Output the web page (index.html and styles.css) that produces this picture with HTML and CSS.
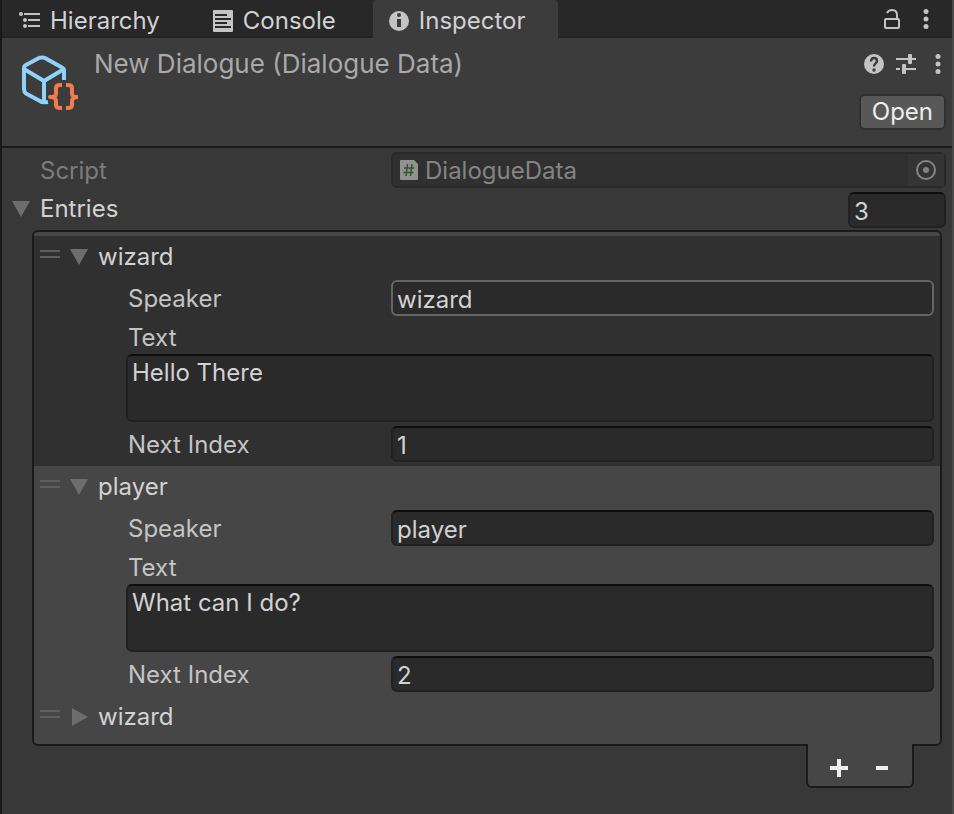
FILE: index.html
```html
<!DOCTYPE html>
<html lang="en">
<head>
    <meta charset="UTF-8">
    <meta name="viewport" content="width=device-width, initial-scale=1.0">
    <title>Inspector</title>
    <link rel="stylesheet" href="styles.css">
</head>
<body>
    <div class="window">
        <nav class="tab-bar">
            <button type="button" class="tab">
                <svg class="icon" width="22" height="20" viewBox="0 0 22 20" fill="currentColor">
                    <circle cx="3" cy="3" r="2"/><circle cx="7" cy="9" r="2"/><circle cx="7" cy="15" r="2"/>
                    <path d="M6 2h16v2H6zM10 8h12v2H10zM10 14h12v2H10z"/>
                </svg>
                Hierarchy
            </button>
            <button type="button" class="tab">
                <svg class="icon" width="20" height="22" viewBox="0 0 20 22">
                    <rect width="20" height="22" rx="1" fill="currentColor"/>
                    <path d="M2 5h12M2 9h16M2 13h12M2 17h16" stroke="#282828" stroke-width="2"/>
                </svg>
                Console
            </button>
            <button type="button" class="tab active">
                <svg class="icon" width="20" height="20" viewBox="0 0 20 20">
                    <circle cx="10" cy="10" r="10" fill="currentColor"/>
                    <circle cx="10" cy="4" r="2" fill="#3c3c3c"/>
                    <path d="M8 8h4v8H8z" fill="#3c3c3c"/>
                </svg>
                Inspector
            </button>
            <div class="tab-tools">
                <button type="button" class="icon-btn" aria-label="Lock">
                    <svg width="16" height="20" viewBox="0 0 16 20" fill="none" stroke="currentColor" stroke-width="2">
                        <rect x="1" y="10" width="14" height="9" rx="1"/>
                        <path d="M3 4C4 2 6 1 8 1c3 0 5 2 5 5v4"/>
                    </svg>
                </button>
                <button type="button" class="icon-btn" aria-label="Window menu">
                    <svg width="6" height="20" viewBox="0 0 6 20" fill="currentColor">
                        <circle cx="3" cy="2.500" r="2.500"/><circle cx="3" cy="10" r="2.500"/><circle cx="3" cy="17.500" r="2.500"/>
                    </svg>
                </button>
            </div>
        </nav>

        <header class="asset-header">
            <svg class="asset-icon" width="58" height="58" viewBox="0 0 58 58" fill="none" stroke-linejoin="round">
                <path d="M44 25V15.500Q44 13.500 42 12.500L25 3Q24 2.500 22 2.500T19 3L5 10.500Q4 11 4 13.500V34Q4 37 6 38.500L20 46Q22 48 28 47M4 14L24 26L44 14M24 26V47" stroke="#8fd3fd" stroke-width="4"/>
                <path d="M42 30H40Q36 30 36 33V39Q36 42 30 42Q36 42 36 46V50Q36 53 40 53H42M46 30H48Q52 30 52 33V39Q52 42 58 42Q52 42 52 46V50Q52 53 48 53H46" stroke="#f37a4c" stroke-width="4"/>
            </svg>
            <h1 class="asset-title">New Dialogue (Dialogue Data)</h1>
            <div class="asset-actions">
                <div class="asset-tools">
                    <button type="button" class="icon-btn" aria-label="Help">
                        <svg width="20" height="20" viewBox="0 0 20 20" fill="none">
                            <circle cx="10" cy="10" r="10" fill="currentColor"/>
                            <path d="M7 7.500C7 5 8.500 4 10.200 4S13 5.200 13 7C13 9.500 10 9.500 10 12.500" stroke="#3c3c3c" stroke-width="2.400"/>
                            <circle cx="10" cy="16" r="1.700" fill="#3c3c3c"/>
                        </svg>
                    </button>
                    <button type="button" class="icon-btn" aria-label="Presets">
                        <svg width="20" height="20" viewBox="0 0 20 20" fill="currentColor">
                            <path d="M0 4h12v2H0zM16 4h4v2h-4zM0 14h4v2H0zM8 14h12v2H8z"/>
                            <rect x="12" width="4" height="10" rx="1"/>
                            <rect x="6" y="10" width="4" height="10" rx="1"/>
                        </svg>
                    </button>
                    <button type="button" class="icon-btn" aria-label="Asset menu">
                        <svg width="6" height="20" viewBox="0 0 6 20" fill="currentColor">
                            <circle cx="3" cy="2.500" r="2.500"/><circle cx="3" cy="10" r="2.500"/><circle cx="3" cy="17.500" r="2.500"/>
                        </svg>
                    </button>
                </div>
                <button type="button" class="open-btn">Open</button>
            </div>
        </header>

        <main class="inspector">
            <div class="row script-row">
                <span class="label">Script</span>
                <div class="object-field">
                    <svg width="18" height="20" viewBox="0 0 18 20">
                        <path d="M1 0H14L18 4V19Q18 20 17 20H1Q0 20 0 19V1Q0 0 1 0Z" fill="#919191"/>
                        <path d="M7.500 4L6 16M12 4L10.500 16M4 8H14M3.500 12.500H13.500" stroke="#35542f" stroke-width="1.500"/>
                    </svg>
                    <span class="object-name">DialogueData</span>
                    <button type="button" class="picker" aria-label="Select script" disabled>
                        <svg width="20" height="20" viewBox="0 0 20 20">
                            <circle cx="10" cy="10" r="9" fill="none" stroke="currentColor" stroke-width="2"/>
                            <circle cx="10" cy="10" r="3" fill="currentColor"/>
                        </svg>
                    </button>
                </div>
            </div>

            <div class="row entries-row">
                <button type="button" class="foldout" aria-expanded="true">
                    <svg class="arrow" width="18" height="18" viewBox="0 0 18 18"><path d="M0 1h18L9 17z"/></svg>
                    <span>Entries</span>
                </button>
                <input type="text" class="field size-field" value="3" aria-label="Entries size">
            </div>

            <div class="list">
                <section class="entry selected">
                    <div class="entry-head">
                        <span class="handle"></span>
                        <button type="button" class="foldout" aria-expanded="true">
                            <svg class="arrow" width="18" height="18" viewBox="0 0 18 18"><path d="M0 1h18L9 17z"/></svg>
                            <span>wizard</span>
                        </button>
                    </div>
                    <div class="entry-body">
                        <div class="row">
                            <label class="label" for="speaker-0">Speaker</label>
                            <input type="text" class="field highlighted" id="speaker-0" value="wizard">
                        </div>
                        <label class="label text-label" for="text-0">Text</label>
                        <textarea class="field text-area" id="text-0">Hello There</textarea>
                        <div class="row">
                            <label class="label" for="next-0">Next Index</label>
                            <input type="text" class="field" id="next-0" value="1">
                        </div>
                    </div>
                </section>

                <section class="entry">
                    <div class="entry-head">
                        <span class="handle"></span>
                        <button type="button" class="foldout" aria-expanded="true">
                            <svg class="arrow" width="18" height="18" viewBox="0 0 18 18"><path d="M0 1h18L9 17z"/></svg>
                            <span>player</span>
                        </button>
                    </div>
                    <div class="entry-body">
                        <div class="row">
                            <label class="label" for="speaker-1">Speaker</label>
                            <input type="text" class="field" id="speaker-1" value="player">
                        </div>
                        <label class="label text-label" for="text-1">Text</label>
                        <textarea class="field text-area" id="text-1">What can I do?</textarea>
                        <div class="row">
                            <label class="label" for="next-1">Next Index</label>
                            <input type="text" class="field" id="next-1" value="2">
                        </div>
                    </div>
                </section>

                <section class="entry">
                    <div class="entry-head">
                        <span class="handle"></span>
                        <button type="button" class="foldout" aria-expanded="false">
                            <svg class="arrow" width="18" height="18" viewBox="0 0 18 18"><path d="M2 0v18l16-9z"/></svg>
                            <span>wizard</span>
                        </button>
                    </div>
                </section>
            </div>

            <div class="list-footer">
                <button type="button" class="icon-btn" aria-label="Add entry">
                    <svg width="18" height="18" viewBox="0 0 18 18" fill="currentColor"><path d="M7 0h4v7h7v4h-7v7H7v-7H0V7h7z"/></svg>
                </button>
                <button type="button" class="icon-btn" aria-label="Remove entry">
                    <svg width="12" height="18" viewBox="0 0 12 18" fill="currentColor"><path d="M0 7h12v4H0z"/></svg>
                </button>
            </div>
        </main>
    </div>
</body>
</html>
```
FILE: styles.css
```css
* {
    margin: 0;
    padding: 0;
    box-sizing: border-box;
}

body {
    font-family: Inter, "Liberation Sans", sans-serif;
    font-size: 24px;
    line-height: 32px;
    color: #d2d2d2;
    background-color: #383838;
}

button,
input,
textarea {
    font: inherit;
    color: inherit;
}

button {
    background: none;
    border: none;
}

svg {
    display: block;
    flex: none;
}

.window {
    min-height: 100vh;
    border-left: 2px solid #191919;
    border-right: 2px solid #4b4b4b;
}

/* Tabs */
.tab-bar {
    display: flex;
    height: 38px;
    background-color: #282828;
    box-shadow: inset 0 -2px #232323;
}

.tab {
    display: flex;
    align-items: center;
    gap: 10px;
    padding: 3px 37px 0 16px;
}

.tab.active {
    padding-right: 32px;
    background-color: #3c3c3c;
    border-radius: 4px 4px 0 0;
}

.icon,
.icon-btn {
    color: #c4c4c4;
}

.tab-tools {
    display: flex;
    align-items: center;
    gap: 23px;
    margin-left: auto;
    padding-right: 23px;
}

/* Asset header */
.asset-header {
    display: flex;
    min-height: 110px;
    padding: 10px 6px 0 18px;
    background-color: #3c3c3c;
    border-bottom: 2px solid #1a1a1a;
}

.asset-icon {
    margin-top: 7px;
}

.asset-title {
    flex: 1;
    margin-left: 16px;
    font-size: 26px;
    font-weight: 400;
    color: #a9a9a9;
}

.asset-actions {
    display: flex;
    flex-direction: column;
    align-items: flex-end;
    gap: 14px;
}

.asset-tools {
    display: flex;
    align-items: center;
    gap: 12px;
    height: 32px;
    padding-right: 5px;
}

.asset-tools .icon-btn:last-child {
    margin-left: 7px;
}

.open-btn {
    height: 36px;
    padding: 0 11px;
    color: #eee;
    background-color: #585858;
    border: 2px solid #303030;
    border-radius: 6px;
}

/* Inspector rows */
.inspector {
    padding: 4px 6px 24px 8px;
}

.row {
    display: flex;
    align-items: center;
}

.label {
    flex: none;
    width: 265px;
    padding: 2px 0 0 2px;
    color: #c4c4c4;
}

.script-row {
    padding-left: 30px;
}

.script-row .label {
    width: 351px;
    padding-left: 0;
    color: #7c7c7c;
}

.entries-row {
    justify-content: space-between;
    margin-top: 4px;
}

.field {
    flex: 1;
    min-width: 0;
    height: 36px;
    padding: 2px 4px 0;
    background-color: #2a2a2a;
    border: 2px solid #212121;
    border-top-color: #0d0d0d;
    border-radius: 6px;
    outline: none;
}

.field.highlighted {
    border-color: #656565;
}

.size-field {
    flex: none;
    width: 98px;
}

.object-field {
    display: flex;
    flex: 1;
    align-items: center;
    height: 36px;
    padding-left: 7px;
    color: #848484;
    background-color: #303030;
    border: 2px solid #292929;
    border-radius: 6px;
}

.object-name {
    flex: 1;
    margin-left: 7px;
    padding-top: 2px;
}

.picker {
    align-self: stretch;
    padding: 0 8px;
    background-color: #343434;
}

.foldout {
    display: flex;
    align-items: center;
    gap: 10px;
    padding: 0 0 2px 2px;
}

.arrow {
    fill: #6d6d6d;
}

/* Entry list */
.list {
    margin: 2px 4px 0 22px;
    padding-top: 4px;
    background-color: #464646;
    border: 2px solid #1a1a1a;
    border-radius: 6px;
}

.entry {
    padding-bottom: 4px;
}

.entry.selected {
    background-color: #303030;
}

.entry-head {
    display: flex;
    align-items: center;
    gap: 8px;
    height: 44px;
    padding-left: 6px;
}

.handle {
    width: 20px;
    height: 8px;
    margin-bottom: 8px;
    border: solid #5f5f5f;
    border-width: 2px 0;
}

.entry-body {
    padding: 0 6px 0 92px;
}

.text-label {
    display: block;
    margin-top: 4px;
}

.text-area {
    display: block;
    width: 100%;
    height: 68px;
    margin-bottom: 4px;
    padding: 1px 4px;
    resize: none;
}

.list-footer {
    position: relative;
    display: flex;
    align-items: center;
    justify-content: center;
    gap: 28px;
    width: 108px;
    height: 44px;
    margin: -2px 32px 0 auto;
    padding: 5px 3px 0 0;
    background-color: #464646;
    border: 2px solid #1a1a1a;
    border-top: none;
    border-radius: 0 0 6px 6px;
}

.list-footer .icon-btn {
    color: #eee;
}
```
